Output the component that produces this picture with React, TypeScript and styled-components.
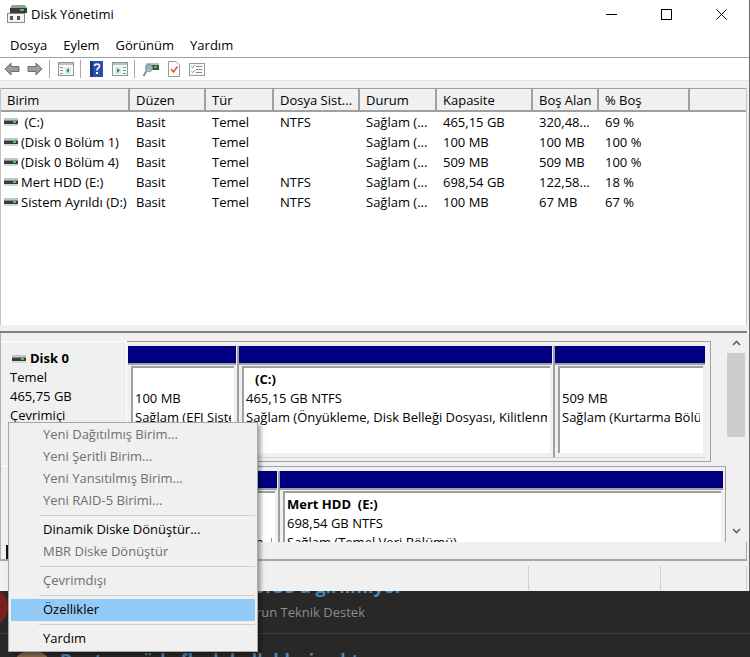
import React from 'react';
import styled, { createGlobalStyle } from 'styled-components';

const GlobalStyle = createGlobalStyle`
  html, body {
    margin: 0;
    padding: 0;
    background: #282828;
  }
  * {
    box-sizing: border-box;
  }
`;

const LINE = '#a0a0a0';
const FACE = '#f0f0f0';

const Page = styled.div`
  position: relative;
  width: 750px;
  height: 657px;
  overflow: hidden;
  background: #282828;
  font-family: "Open Sans", "Noto Sans", sans-serif;
  font-size: 13px;
  color: #000;
`;

const Window = styled.div`
  display: flex;
  flex-direction: column;
  height: 591px;
  background: ${FACE};
  border-right: 1px solid #6a6a6a;
`;

const TitleBar = styled.div`
  display: flex;
  align-items: center;
  height: 31px;
  padding: 0 22px 3px 7px;
  background: #fff;
`;

const AppName = styled.span`
  margin-left: 4px;
  flex: 1;
`;

const WinControls = styled.div`
  display: flex;
  gap: 44px;
  align-items: center;
`;

const MenuBar = styled.div`
  display: flex;
  gap: 16px;
  align-items: center;
  height: 27px;
  padding: 2px 0 0 10px;
  background: #fff;
  border-bottom: 1px solid ${LINE};
`;

const ToolBar = styled.div`
  display: flex;
  align-items: center;
  height: 23px;
  padding-left: 4px;
  background: #fff;
  border-bottom: 1px solid #e4e4e4;
`;

const ToolSep = styled.span`
  width: 1px;
  height: 18px;
  margin: 0 8px 0 6px;
  background: #a8a8a8;
`;

const ToolGap = styled.span<{ $w: number }>`
  width: ${(p) => p.$w}px;
`;

const ListPane = styled.div`
  margin-top: 7px;
  height: 237px;
  margin-right: 2px;
  background: #fff;
  border-left: 1px solid #c4c4c4;
  border-right: 1px solid #c4c4c4;
`;

const Columns = styled.div`
  display: grid;
  grid-template-columns: 129px 76px 68px 86px 77px 96px 66px 91px 1fr;
`;

const HeaderRow = styled(Columns)`
  height: 24px;
  background: ${FACE};
  border-top: 1px solid ${LINE};
  border-bottom: 2px solid ${LINE};
`;

const HeaderCell = styled.div`
  display: flex;
  align-items: center;
  padding-left: 6px;
  white-space: nowrap;
  overflow: hidden;
  border-right: 2px solid ${LINE};
  &:last-child {
    border-right: 0;
  }
`;

const Row = styled(Columns)`
  height: 20px;
  align-items: center;
`;

const Cell = styled.div`
  display: flex;
  align-items: center;
  padding-left: 6px;
  white-space: nowrap;
  overflow: hidden;
`;

const NameCell = styled(Cell)`
  padding-left: 3px;
  gap: 3px;
`;

const VolumeName = styled.span`
  white-space: pre;
`;

const Splitter = styled.div`
  height: 8px;
  margin-right: 2px;
  border-bottom: 2px solid #808080;
  background: ${FACE};
`;

const DiskPane = styled.div`
  display: flex;
  height: 209px;
  overflow: hidden;
  border-left: 1px solid #b0b0b0;
`;

const DiskArea = styled.div`
  flex: 1;
  padding-top: 8px;
  overflow: hidden;
`;

const DiskRow = styled.div`
  display: flex;
  margin-bottom: 4px;
`;

const DiskLabel = styled.div`
  width: 126px;
  padding: 7px 0 0 9px;
  line-height: 19px;
  border-top: 1px solid #fff;
  border-right: 1px solid #fff;
`;

const DiskName = styled.div`
  display: flex;
  align-items: center;
  gap: 4px;
  margin-left: 2px;
  font-weight: 700;
`;

const Frame = styled.div<{ $w: number }>`
  display: flex;
  flex: none;
  width: ${(p) => p.$w}px;
  height: 121px;
  padding: 4px 0 0 1px;
  border: 1px solid ${LINE};
  border-left: 0;
`;

const Partition = styled.div<{ $w: number }>`
  flex: none;
  width: ${(p) => p.$w}px;
  height: 112px;
  padding-right: 1px;
  border-right: 2px solid ${LINE};
  border-bottom: 1px solid #d4d4d4;
  &:last-child {
    border-right: 0;
    padding-right: 0;
  }
`;

const PartBar = styled.div`
  height: 19px;
  background: #000080;
  border-bottom: 2px solid ${LINE};
`;

const PartBox = styled.div`
  height: 87px;
  margin: 1px 2px 0 3px;
  padding: 2px 3px 0 2px;
  line-height: 19px;
  background: #fff;
  border-top: 2px solid ${LINE};
  border-left: 2px solid ${LINE};
  overflow: hidden;
`;

const PartLine = styled.div<{ $bold?: boolean; $indent?: number }>`
  height: 19px;
  white-space: pre;
  overflow: hidden;
  font-weight: ${(p) => (p.$bold ? 700 : 400)};
  padding-left: ${(p) => p.$indent ?? 0}px;
`;

const VScroll = styled.div`
  display: flex;
  flex: none;
  flex-direction: column;
  align-items: center;
  width: 22px;
  padding: 7px 4px 0 0;
`;

const ScrollThumb = styled.div`
  flex: none;
  width: 18px;
  height: 84px;
  margin: 7px 0 91px;
  background: #cdcdcd;
`;

const LegendBar = styled.div`
  display: flex;
  height: 19px;
  margin-right: 2px;
  padding: 3px 0 0 5px;
  border-left: 1px solid #b0b0b0;
  border-bottom: 2px solid #a8a8a8;
  border-right: 1px solid #a8a8a8;
`;

const LegendSwatch = styled.span`
  width: 2px;
  height: 14px;
  background: #111;
`;

const StatusBar = styled.div`
  display: flex;
  justify-content: flex-end;
  flex: 1;
  margin-top: 3px;
  padding: 2px 2px 1px 0;
`;

const StatusCell = styled.div<{ $w: number }>`
  width: ${(p) => p.$w}px;
  border-right: 1px solid #d0d0d0;
  &:first-child {
    border-left: 1px solid #d0d0d0;
  }
`;

const Thread = styled.div<{ $h: number }>`
  display: flex;
  height: ${(p) => p.$h}px;
  overflow: hidden;
  border-bottom: 1px solid #3d3d3d;
`;

const Avatar = styled.div<{ $c: string; $left: number; $top: number }>`
  flex: none;
  width: 40px;
  height: 40px;
  margin: ${(p) => p.$top}px 0 0 ${(p) => p.$left}px;
  border-radius: 50%;
  background: ${(p) => p.$c};
`;

const ThreadBody = styled.div<{ $w: number; $left: number }>`
  width: ${(p) => p.$w}px;
  margin-left: ${(p) => p.$left}px;
`;

const ThreadTitle = styled.div<{ $right?: boolean; $top: number }>`
  margin-top: ${(p) => p.$top}px;
  font-size: 18px;
  line-height: 24px;
  font-weight: 700;
  color: #4a8aba;
  white-space: nowrap;
  text-align: ${(p) => (p.$right ? 'right' : 'left')};
`;

const ThreadMeta = styled.div`
  margin-top: 5px;
  padding-right: 38px;
  color: #8c8c8c;
  text-align: right;
  white-space: nowrap;
`;

const ContextMenu = styled.div`
  position: absolute;
  left: 8px;
  top: 422px;
  width: 250px;
  height: 230px;
  padding: 1px 2px;
  background: #f0f0f0;
  border: 1px solid #a8a8a8;
  box-shadow: 3px 3px 4px rgba(0, 0, 0, 0.35);
`;

const MenuItem = styled.div<{ $off?: boolean; $on?: boolean }>`
  display: flex;
  align-items: center;
  height: 22px;
  padding: 0 0 2px 32px;
  color: ${(p) => (p.$off ? '#6f6f6f' : '#000')};
  background: ${(p) => (p.$on ? '#91c9f7' : 'transparent')};
`;

const MenuSep = styled.div`
  height: 1px;
  margin: 3px 0 3px 28px;
  background: #cfcfcf;
`;

const DiskIcon = () => (
  <svg width="14" height="8" viewBox="0 0 14 8">
    <rect x="0" y="0" width="14" height="2.5" fill="#c4c4c4" />
    <rect x="0" y="2.5" width="14" height="3.5" fill="#3c3c3c" />
    <rect x="9" y="3" width="3" height="2" fill="#38d048" />
    <rect x="0" y="6" width="14" height="2" fill="#d8d8d8" />
  </svg>
);

const AppIcon = () => (
  <svg width="20" height="18" viewBox="0 0 20 18">
    <path d="M5 0h13l2 3v5H3V3z" fill="#9a9a9a" />
    <rect x="3" y="3" width="17" height="5" fill="#3a3a3a" />
    <rect x="13" y="4" width="4" height="2" fill="#3ad04a" />
    <rect x="0.5" y="8.5" width="17" height="9" fill="#f4f4f4" stroke="#8a8a8a" />
    <rect x="3" y="11" width="3" height="4" fill="#555" />
    <rect x="10" y="11" width="3" height="4" fill="#555" />
  </svg>
);

const ArrowIcon = ({ flip }: { flip?: boolean }) => (
  <svg width="16" height="14" viewBox="0 0 16 14" style={flip ? { transform: 'scaleX(-1)' } : undefined}>
    <path d="M1 7l6-6v3.5h8v5H7V13z" fill="#9c9c9c" stroke="#6e6e6e" />
  </svg>
);

const PaneIcon = ({ right }: { right?: boolean }) => (
  <svg width="16" height="14" viewBox="0 0 16 14">
    <rect x="0.5" y="0.5" width="15" height="13" fill="#f6f8f8" stroke="#8a979c" />
    <rect x="1" y="1" width="14" height="2" fill="#b9c3c7" />
    {right ? (
      <>
        <path d="M3 5h6v7H3z" fill="#e2ece4" />
        <path d="M5 6l3 2.5L5 11z" fill="#1e9c3c" />
        <path d="M11 5h3v1h-3zM11 8h3v1h-3zM11 11h3v1h-3z" fill="#8a979c" />
      </>
    ) : (
      <>
        <path d="M2 5h3v1H2zM2 8h3v1H2zM2 11h3v1H2z" fill="#8a979c" />
        <path d="M7 5h6v7H7z" fill="#e2ece4" />
        <path d="M11 6l-3 2.5 3 2.5z" fill="#1e9c3c" />
      </>
    )}
  </svg>
);

const HelpIcon = () => (
  <svg width="13" height="16" viewBox="0 0 13 16">
    <rect width="13" height="16" fill="#2b4fb0" />
    <rect x="0" y="0" width="3" height="16" fill="#1c3585" />
    <path d="M4.5 5c0-2.5 5-2.5 5 0 0 2-2.5 2-2.5 4.5" fill="none" stroke="#fff" strokeWidth="1.6" />
    <rect x="6" y="11" width="2" height="2" fill="#fff" />
  </svg>
);

const SearchDiskIcon = () => (
  <svg width="16" height="15" viewBox="0 0 16 15">
    <rect x="3" y="3" width="13" height="5" fill="#4a4a4a" />
    <rect x="3" y="1" width="13" height="2" fill="#bdbdbd" />
    <rect x="11" y="4" width="3" height="2" fill="#38d048" />
    <circle cx="6" cy="6" r="3.5" fill="#bfe2f0" fillOpacity="0.7" stroke="#6e8f9c" />
    <path d="M3.5 9L0.5 14" stroke="#7a7a7a" strokeWidth="1.6" />
  </svg>
);

const CheckDocIcon = () => (
  <svg width="12" height="16" viewBox="0 0 12 16">
    <path d="M0.5 0.5H8l3.5 3.5v11.5H0.5z" fill="#fff" stroke="#9a9a9a" />
    <path d="M3 8l2.5 3L9.5 5.5" fill="none" stroke="#e0562a" strokeWidth="1.6" />
  </svg>
);

const ChecklistIcon = () => (
  <svg width="16" height="13" viewBox="0 0 16 13">
    <rect x="0.5" y="0.5" width="15" height="12" fill="#f8f8f8" stroke="#9a9a9a" />
    <path d="M2.5 3.5l1 1 2-2M2.5 8.5l1 1 2-2" fill="none" stroke="#3a7ed0" />
    <path d="M7 3.5h6M7 6.5h6M7 9.5h6" stroke="#8a8a8a" />
  </svg>
);

const columns = ['Birim', 'Düzen', 'Tür', 'Dosya Sist...', 'Durum', 'Kapasite', 'Boş Alan', '% Boş', ''];

const volumes = [
  [' (C:)', 'Basit', 'Temel', 'NTFS', 'Sağlam (...', '465,15 GB', '320,48...', '69 %'],
  ['(Disk 0 Bölüm 1)', 'Basit', 'Temel', '', 'Sağlam (...', '100 MB', '100 MB', '100 %'],
  ['(Disk 0 Bölüm 4)', 'Basit', 'Temel', '', 'Sağlam (...', '509 MB', '509 MB', '100 %'],
  ['Mert HDD (E:)', 'Basit', 'Temel', 'NTFS', 'Sağlam (...', '698,54 GB', '122,58...', '18 %'],
  ['Sistem Ayrıldı (D:)', 'Basit', 'Temel', 'NTFS', 'Sağlam (...', '100 MB', '67 MB', '67 %'],
];

const disk0 = [
  { w: 111, name: ' ', indent: 0, size: '100 MB', state: 'Sağlam (EFI Sistem Bölümü)' },
  { w: 316, name: '(C:)', indent: 9, size: '465,15 GB NTFS', state: 'Sağlam (Önyükleme, Disk Belleği Dosyası, Kilitlenme Dökümü, Birincil Bölüm)' },
  { w: 150, name: ' ', indent: 0, size: '509 MB', state: 'Sağlam (Kurtarma Bölümü)' },
];

const disk1 = [
  { w: 152, name: 'Sistem Ayrıldı  (D:)', indent: 0, size: '100 MB NTFS', state: 'Sağlam (Sistem, Etkin, Birincil Bölüm)' },
  { w: 443, name: 'Mert HDD  (E:)', indent: 0, size: '698,54 GB NTFS', state: 'Sağlam (Temel Veri Bölümü)' },
];

const menu = [
  { label: 'Yeni Dağıtılmış Birim...', off: true },
  { label: 'Yeni Şeritli Birim...', off: true },
  { label: 'Yeni Yansıtılmış Birim...', off: true },
  { label: 'Yeni RAID-5 Birimi...', off: true },
  null,
  { label: 'Dinamik Diske Dönüştür...' },
  { label: 'MBR Diske Dönüştür', off: true },
  null,
  { label: 'Çevrimdışı', off: true },
  null,
  { label: 'Özellikler', on: true },
  null,
  { label: 'Yardım' },
];

const Partitions = ({ items }: { items: typeof disk0 }) => (
  <>
    {items.map((p) => (
      <Partition key={p.state} $w={p.w}>
        <PartBar />
        <PartBox>
          <PartLine $bold $indent={p.indent}>{p.name}</PartLine>
          <PartLine>{p.size}</PartLine>
          <PartLine>{p.state}</PartLine>
        </PartBox>
      </Partition>
    ))}
  </>
);

export default function App() {
  return (
    <Page>
      <GlobalStyle />
      <Window>
        <TitleBar>
          <AppIcon />
          <AppName>Disk Yönetimi</AppName>
          <WinControls>
            <svg width="11" height="11" viewBox="0 0 11 11">
              <path d="M0 5.5h11" stroke="#000" />
            </svg>
            <svg width="11" height="11" viewBox="0 0 11 11">
              <rect x="0.5" y="0.5" width="10" height="10" fill="none" stroke="#000" />
            </svg>
            <svg width="11" height="11" viewBox="0 0 11 11">
              <path d="M0.5 0.5l10 10M10.5 0.5l-10 10" stroke="#000" />
            </svg>
          </WinControls>
        </TitleBar>
        <MenuBar>
          <span>Dosya</span>
          <span>Eylem</span>
          <span>Görünüm</span>
          <span>Yardım</span>
        </MenuBar>
        <ToolBar>
          <ArrowIcon />
          <ToolGap $w={7} />
          <ArrowIcon flip />
          <ToolSep />
          <PaneIcon />
          <ToolSep />
          <ToolGap $w={1} />
          <HelpIcon />
          <ToolGap $w={9} />
          <PaneIcon right />
          <ToolSep />
          <SearchDiskIcon />
          <ToolGap $w={9} />
          <CheckDocIcon />
          <ToolGap $w={9} />
          <ChecklistIcon />
        </ToolBar>
        <ListPane>
          <HeaderRow>
            {columns.map((c, i) => (
              <HeaderCell key={i}>{c}</HeaderCell>
            ))}
          </HeaderRow>
          {volumes.map((v) => (
            <Row key={v[0]}>
              <NameCell>
                <DiskIcon />
                <VolumeName>{v[0]}</VolumeName>
              </NameCell>
              {v.slice(1).map((c, i) => (
                <Cell key={i}>{c}</Cell>
              ))}
            </Row>
          ))}
        </ListPane>
        <Splitter />
        <DiskPane>
          <DiskArea>
            <DiskRow>
              <DiskLabel>
                <DiskName>
                  <DiskIcon />
                  Disk 0
                </DiskName>
                <div>Temel</div>
                <div>465,75 GB</div>
                <div>Çevrimiçi</div>
              </DiskLabel>
              <Frame $w={584}>
                <Partitions items={disk0} />
              </Frame>
            </DiskRow>
            <DiskRow>
              <DiskLabel>
                <DiskName>
                  <DiskIcon />
                  Disk 1
                </DiskName>
              </DiskLabel>
              <Frame $w={599}>
                <Partitions items={disk1} />
              </Frame>
            </DiskRow>
          </DiskArea>
          <VScroll>
            <svg width="9" height="6" viewBox="0 0 9 6">
              <path d="M1 5l3.5-3.5L8 5" fill="none" stroke="#606060" strokeWidth="1.6" />
            </svg>
            <ScrollThumb />
            <svg width="9" height="6" viewBox="0 0 9 6">
              <path d="M1 1l3.5 3.5L8 1" fill="none" stroke="#606060" strokeWidth="1.6" />
            </svg>
          </VScroll>
        </DiskPane>
        <LegendBar>
          <LegendSwatch />
        </LegendBar>
        <StatusBar>
          <StatusCell $w={133} />
          <StatusCell $w={86} />
        </StatusBar>
      </Window>
      <Thread $h={43}>
        <Avatar $c="#7a1f1f" $left={-32} $top={-4} />
        <ThreadBody $w={345} $left={50}>
          <ThreadTitle $right $top={-17}>Bilgisayar açılırken BIOS'a girilmiyor</ThreadTitle>
          <ThreadMeta>Donanım ve Yazılım Sorun Teknik Destek</ThreadMeta>
        </ThreadBody>
      </Thread>
      <Thread $h={30}>
        <Avatar $c="#8a6a4a" $left={12} $top={16} />
        <ThreadBody $w={345} $left={8}>
          <ThreadTitle $top={14}>Bootmenüde flash bellekleri yoktur</ThreadTitle>
        </ThreadBody>
      </Thread>
      <ContextMenu>
        {menu.map((m, i) =>
          m ? (
            <MenuItem key={i} $off={m.off} $on={m.on}>
              {m.label}
            </MenuItem>
          ) : (
            <MenuSep key={i} />
          ),
        )}
      </ContextMenu>
    </Page>
  );
}
